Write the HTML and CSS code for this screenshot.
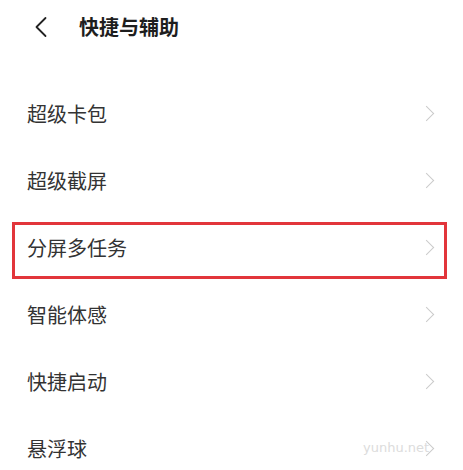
FILE: index.html
```html
<!DOCTYPE html>
<html lang="zh-CN">
<head>
  <meta charset="utf-8">
  <meta name="viewport" content="width=device-width, initial-scale=1">
  <title>快捷与辅助</title>
  <link rel="stylesheet" href="styles.css">
</head>
<body>
  <header class="top-bar">
    <svg class="back" width="14" height="22" viewBox="0 0 14 22">
      <path d="M11.5 2 L2.5 11 L11.5 20" fill="none" stroke="#222" stroke-width="1.8" stroke-linecap="round" stroke-linejoin="round"/>
    </svg>
    <h1 class="title">快捷与辅助</h1>
  </header>

  <ul class="menu">
    <li class="item"><span>超级卡包</span><i class="arrow"></i></li>
    <li class="item"><span>超级截屏</span><i class="arrow"></i></li>
    <li class="item marked"><span>分屏多任务</span><i class="arrow"></i></li>
    <li class="item"><span>智能体感</span><i class="arrow"></i></li>
    <li class="item"><span>快捷启动</span><i class="arrow"></i></li>
    <li class="item"><span>悬浮球</span><i class="arrow"></i></li>
  </ul>

  <div class="watermark">yunhu.net</div>
</body>
</html>
```

FILE: styles.css
```css
body {
  margin: 0;
  background: #fff;
  font-family: "Noto Sans CJK SC", "Noto Sans", sans-serif;
  color: #333;
  position: relative;
  height: 470px;
  overflow: hidden;
}

.top-bar {
  height: 54px;
  display: flex;
  align-items: center;
  padding-left: 34px;
}

.back {
  display: block;
}

.title {
  margin: 0 0 0 31px;
  font-size: 20px;
  font-weight: 700;
  color: #1e1e1e;
  line-height: 1;
}

.menu {
  list-style: none;
  margin: 26px 0 0;
  padding: 0;
}

.item {
  height: 67px;
  display: flex;
  align-items: center;
  justify-content: space-between;
  padding: 0 31px 0 27px;
  font-size: 20px;
  position: relative;
}

.arrow {
  width: 10px;
  height: 10px;
  border-top: 1.6px solid #cacaca;
  border-right: 1.6px solid #cacaca;
  transform: rotate(45deg);
}

.marked::after {
  content: '';
  position: absolute;
  left: 12px;
  right: 16px;
  top: 8px;
  bottom: 2px;
  border: 3px solid #e2353b;
}

.watermark {
  position: absolute;
  left: 363px;
  top: 440px;
  font-family: "DejaVu Sans", sans-serif;
  font-size: 13px;
  color: #dcdcdc;
}
```
